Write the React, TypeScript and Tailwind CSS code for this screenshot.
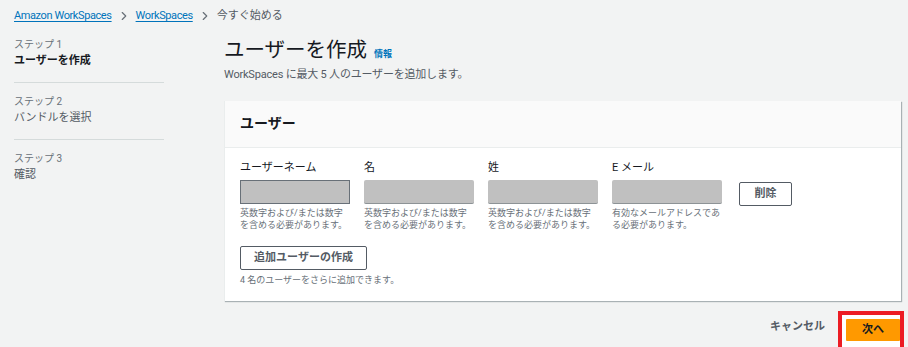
import React from 'react';
import { ChevronRight } from 'lucide-react';

const steps = [
  { label: 'ステップ 1', title: 'ユーザーを作成', active: true },
  { label: 'ステップ 2', title: 'バンドルを選択', active: false },
  { label: 'ステップ 3', title: '確認', active: false },
];

const fields = [
  { label: 'ユーザーネーム', hint: ['英数字および/または数字', 'を含める必要があります。'], outlined: true },
  { label: '名', hint: ['英数字および/または数字', 'を含める必要があります。'], outlined: false },
  { label: '姓', hint: ['英数字および/または数字', 'を含める必要があります。'], outlined: false },
  { label: 'E メール', hint: ['有効なメールアドレスであ', 'る必要があります。'], outlined: false },
];

const App = () => {
  return (
    <div
      className="w-[908px] h-[347px] overflow-hidden bg-[#f2f3f3] text-[#16191f]"
      style={{ fontFamily: 'Roboto, "Noto Sans CJK JP", sans-serif' }}
    >
      {/* Breadcrumb */}
      <div className="flex items-center h-[22px] mt-[5px] pl-[14px] text-[11px]">
        <a className="text-[#0073bb] underline underline-offset-2 tracking-[-0.4px]">Amazon WorkSpaces</a>
        <ChevronRight className="w-[14px] h-[14px] mx-[5px] text-[#687078]" strokeWidth={2} />
        <a className="text-[#0073bb] underline underline-offset-2 tracking-[-0.4px]">WorkSpaces</a>
        <ChevronRight className="w-[14px] h-[14px] mx-[5px] text-[#687078]" strokeWidth={2} />
        <span className="text-[#545b64]">今すぐ始める</span>
      </div>

      <div className="flex mt-[7px]">
        {/* Step nav */}
        <nav className="w-[150px] ml-[14px] shrink-0">
          {steps.map((s, i) => (
            <div
              key={s.label}
              className={i < steps.length - 1 ? 'border-b border-[#d5dbdb] pb-[13px]' : ''}
              style={{ paddingTop: i > 0 ? 11 : 3 }}
            >
              <div className="text-[10px] leading-[15px] text-[#687078]">{s.label}</div>
              <div
                className={
                  s.active
                    ? 'mt-[1px] text-[11px] leading-[16px] font-bold text-[#16191f]'
                    : 'mt-[1px] text-[11px] leading-[16px] text-[#545b64]'
                }
              >
                {s.title}
              </div>
            </div>
          ))}
        </nav>

        {/* Main */}
        <main className="ml-[60px] w-[677px] pt-[2px]">
          <div className="flex items-baseline gap-[7px]">
            <h1 className="text-[20.5px] leading-[28px] font-normal">ユーザーを作成</h1>
            <span className="text-[9px] font-bold text-[#0073bb]">情報</span>
          </div>
          <p className="mt-[3px] text-[11px] leading-[16px] text-[#545b64] tracking-[-0.2px]">
            WorkSpaces に最大 5 人のユーザーを追加します。
          </p>

          {/* Card */}
          <div className="mt-[18px] bg-white border-l border-[#eaeded] shadow-[1px_1px_1px_0_rgba(0,28,36,0.3)]">
            <div className="h-[47px] bg-[#fafafa] border-b border-[#eaeded] pl-[15px] pt-[12px]">
              <h2 className="text-[14px] leading-[20px] font-bold">ユーザー</h2>
            </div>
            <div className="pl-[15px] pt-[12px] pb-[15px]">
              <div className="flex">
                {fields.map((f) => (
                  <div key={f.label} className="w-[110px] mr-[14px]">
                    <div className="text-[11px] leading-[16px]">{f.label}</div>
                    <div
                      className={
                        f.outlined
                          ? 'mt-[4px] h-[24px] bg-[#c0c0c0] border border-[#687078]'
                          : 'mt-[4px] h-[24px] bg-[#c0c0c0] border-b border-[#8d9396] rounded-[2px]'
                      }
                    />
                    <div className="mt-[3px] text-[9px] leading-[12px] text-[#687078] whitespace-nowrap">
                      {f.hint[0]}
                      <br />
                      {f.hint[1]}
                    </div>
                  </div>
                ))}
                <div className="pt-[20px] ml-[3px]">
                  <button className="h-[24px] w-[53px] border border-[#545b64] bg-white text-[11px] font-bold text-[#545b64] rounded-[2px]">
                    削除
                  </button>
                </div>
              </div>
              <button className="mt-[15px] h-[24px] w-[127px] border border-[#545b64] bg-white text-[11px] font-bold text-[#545b64] rounded-[2px]">
                追加ユーザーの作成
              </button>
              <div className="mt-[4px] text-[9px] leading-[12px] text-[#687078]">
                4 名のユーザーをさらに追加できます。
              </div>
            </div>
          </div>

          {/* Footer */}
          <div className="flex items-start justify-end mt-[10px] -mr-[3px]">
            <button className="mt-[8px] mr-[13px] text-[11px] font-bold text-[#545b64]">キャンセル</button>
            <div className="w-[66px] h-[40px] border-[4px] border-[#ec1c24] bg-white pl-[4px] pt-[1px]">
              <button className="w-[54px] h-[22px] bg-[#ff9900] text-[11px] font-semibold text-[#16191f] rounded-[1px]">
                次へ
              </button>
            </div>
          </div>
        </main>
      </div>
    </div>
  );
};

export default App;
